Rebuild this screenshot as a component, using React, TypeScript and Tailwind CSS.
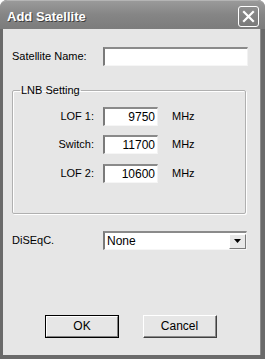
export default function App() {
  const font = { fontFamily: '"Liberation Sans", Arial, sans-serif' }

  const field =
    'h-[19px] bg-white border-solid border-t-2 border-l-2 border-r border-b border-t-[#8a8a8a] border-l-[#7a7a7a] border-r-[#f2f2f2] border-b-[#f6f6f6]'

  const lnbRows = [
    { label: 'LOF 1:', value: '9750', mt: 'mt-0' },
    { label: 'Switch:', value: '11700', mt: 'mt-[9px]' },
    { label: 'LOF 2:', value: '10600', mt: 'mt-[10px]' },
  ]

  return (
    <div className="w-[265px] h-[359px] bg-white" style={font}>
      {/* Window frame */}
      <div className="w-full h-full flex flex-col bg-[#6a6a6a] rounded-t-[7px] overflow-hidden">
        {/* Title bar */}
        <div className="h-[29px] shrink-0 flex items-start justify-between pl-[7px] pr-[6px] bg-gradient-to-b from-[#9a9a9a] via-[#858585] to-[#7c7c7c] border-t border-[#b4b4b4] rounded-t-[7px]">
          <span
            className="pt-[8px] text-[13px] leading-[15px] font-bold text-white"
            style={{ textShadow: '1px 1px 0 #3c3c3c' }}
          >
            Add Satellite
          </span>
          <button className="mt-[5px] w-[21px] h-[21px] flex items-center justify-center rounded-[3px] border border-white bg-gradient-to-b from-[#8e8e8e] to-[#7a7a7a]">
            <svg width="13" height="13" viewBox="0 0 13 13">
              <path d="M2 2 L11 11 M11 2 L2 11" stroke="white" strokeWidth="2.2" strokeLinecap="square" />
            </svg>
          </button>
        </div>

        {/* Body */}
        <div className="flex-1 ml-[3px] mr-[4px] mb-[4px] bg-[#e6e6e6] pl-[9px] pt-[18px] text-[11px] leading-[13px] text-black border-r border-[#8c8c8c]">
          {/* Satellite name */}
          <div className="flex items-center">
            <span className="w-[91px]">Satellite Name:</span>
            <div className={`w-[145px] ${field}`} />
          </div>

          {/* LNB group */}
          <fieldset className="mt-[18px] w-[234px] border border-[#b0b0b0] rounded-[2px] pt-[10px] pb-[30px] shadow-[inset_1px_1px_0_#ffffff,1px_1px_0_#ffffff]">
            <legend className="ml-[7px] px-[1px]">LNB Setting</legend>
            {lnbRows.map((row) => (
              <div key={row.label} className={`flex items-center ${row.mt}`}>
                <span className="w-[82px] text-right pr-[1px]">{row.label}</span>
                <div className={`ml-[8px] w-[55px] ${field} flex items-center justify-end pr-[2px]`}>
                  <span className="text-[12px]">{row.value}</span>
                </div>
                <span className="ml-[14px]">MHz</span>
              </div>
            ))}
          </fieldset>

          {/* DiSEqC */}
          <div className="flex items-center mt-[17px]">
            <span className="w-[91px]">DiSEqC.</span>
            <div className={`w-[144px] ${field} flex items-center justify-between`}>
              <span className="pl-[2px] text-[12px]">None</span>
              <div className="w-[17px] h-[15px] flex items-center justify-center bg-[#e8e8e8] border-solid border-t border-l border-r border-b border-t-white border-l-white border-r-[#7a7a7a] border-b-[#7a7a7a]">
                <svg width="7" height="4" viewBox="0 0 7 4">
                  <path d="M0 0 H7 L3.5 4 Z" fill="black" />
                </svg>
              </div>
            </div>
          </div>

          {/* Buttons */}
          <div className="flex mt-[65px] ml-[33px] gap-[24px]">
            <button className="w-[74px] h-[23px] border border-black bg-[#e6e6e6]">
              <div className="w-full h-full flex items-center justify-center border-solid border-t border-l border-r border-b border-t-white border-l-white border-r-[#808080] border-b-[#808080] text-[12px]">
                OK
              </div>
            </button>
            <button className="w-[74px] h-[23px] bg-[#e6e6e6] border-solid border-t border-l border-r border-b border-t-white border-l-white border-r-[#404040] border-b-[#404040]">
              <div className="w-full h-full flex items-center justify-center border-solid border-r border-b border-r-[#8a8a8a] border-b-[#8a8a8a] text-[12px]">
                Cancel
              </div>
            </button>
          </div>
        </div>
      </div>
    </div>
  )
}
